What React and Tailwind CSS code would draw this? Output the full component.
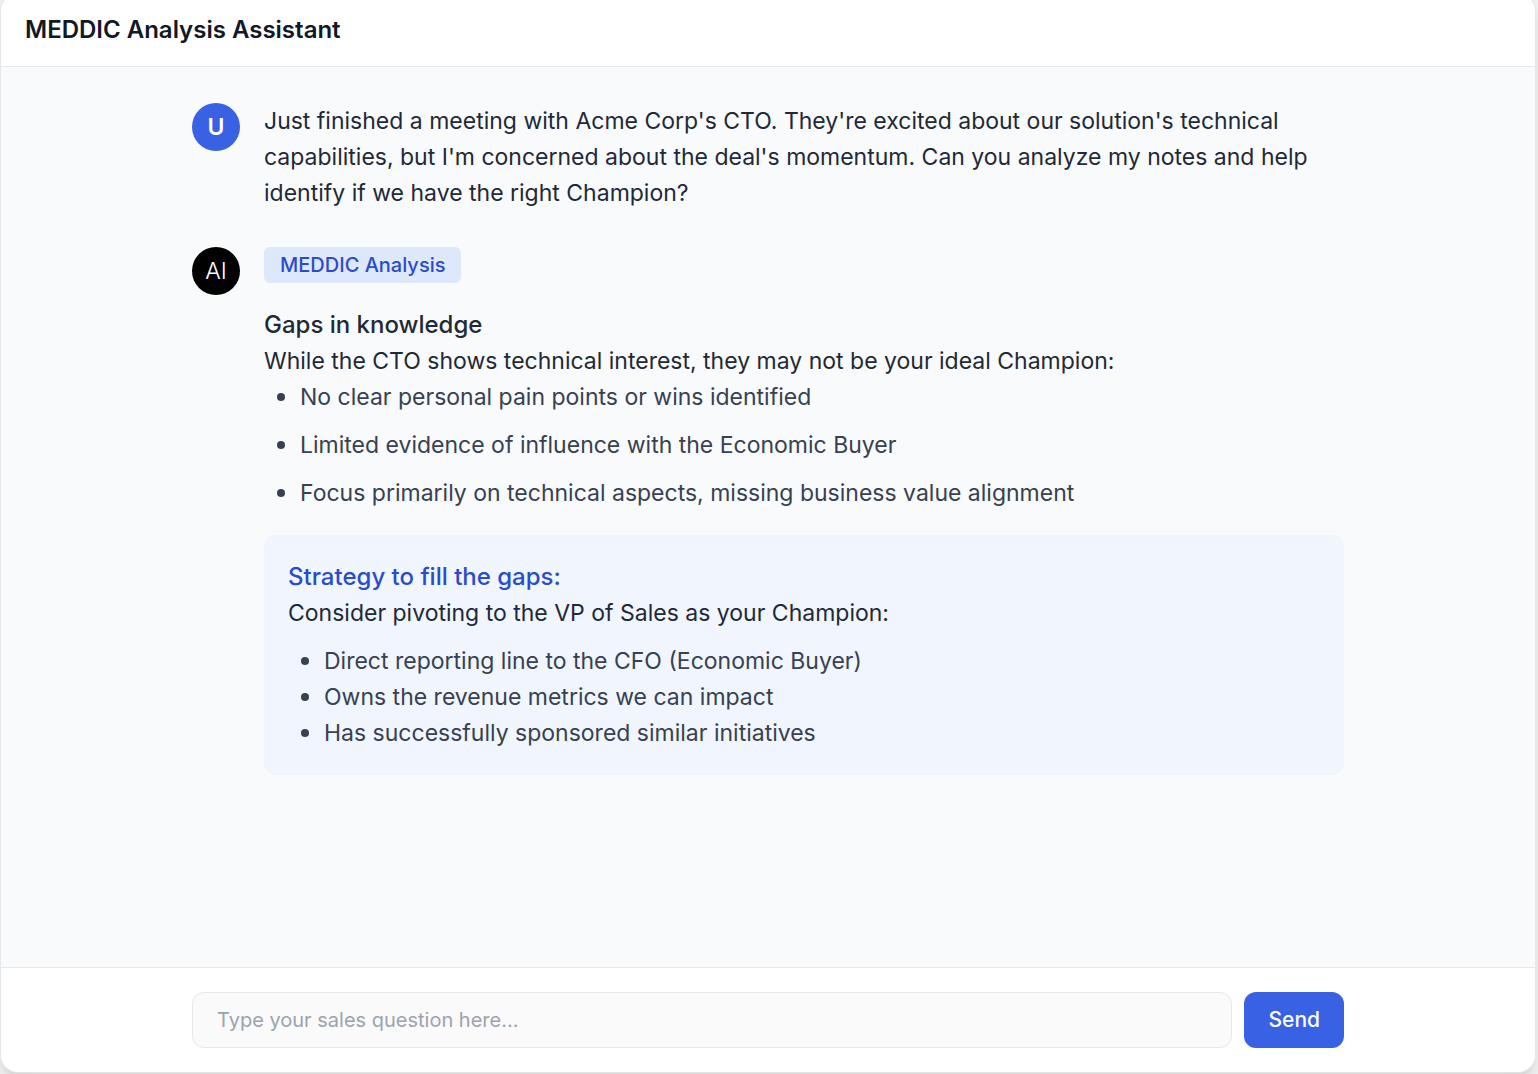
const gaps = [
  'No clear personal pain points or wins identified',
  'Limited evidence of influence with the Economic Buyer',
  'Focus primarily on technical aspects, missing business value alignment',
]

const strategy = [
  'Direct reporting line to the CFO (Economic Buyer)',
  'Owns the revenue metrics we can impact',
  'Has successfully sponsored similar initiatives',
]

function Avatar({ className, children }) {
  return (
    <div className={`flex size-12 shrink-0 items-center justify-center rounded-full text-white ${className}`}>
      {children}
    </div>
  )
}

function BulletList({ items, className }) {
  return (
    <ul className={`text-[#374151] ${className}`}>
      {items.map((item) => (
        <li key={item} className="flex">
          <span aria-hidden="true" className="ml-[13px] mr-[15px] mt-3.5 size-2 shrink-0 rounded-full bg-[#374151]" />
          {item}
        </li>
      ))}
    </ul>
  )
}

export default function App() {
  return (
    <div className="flex h-screen overflow-hidden bg-[#f0f0f0] pr-0.5 pb-px font-['Inter',sans-serif] text-[23px] leading-9 text-[#1f2937]">
      <div className="-mt-[7px] flex flex-1 flex-col overflow-hidden rounded-[18px] border border-[#e5e7eb] bg-white shadow-lg">
        <header className="border-b border-[#e5e7eb] px-6 py-[18px]">
          <h1 className="text-2xl leading-9 font-semibold text-[#111827]">MEDDIC Analysis Assistant</h1>
        </header>

        <main className="min-h-0 flex-1 overflow-y-auto bg-[#f9fafb] py-9">
          <div className="mx-auto flex max-w-6xl flex-col gap-9">
            <section className="flex gap-6">
              <Avatar className="bg-[#3861e3] font-semibold">U</Avatar>
              <p className="min-w-0 flex-1">
                Just finished a meeting with Acme Corp's CTO. They're excited about our solution's technical
                capabilities, but I'm concerned about the deal's momentum. Can you analyze my notes and help
                identify if we have the right Champion?
              </p>
            </section>

            <section className="flex gap-6">
              <Avatar className="bg-black font-light">AI</Avatar>
              <div className="min-w-0 flex-1">
                <span className="inline-block rounded-md bg-[#dde8fb] px-4 text-xl leading-9 font-medium text-[#2a4bd0] align-top">
                  MEDDIC Analysis
                </span>
                <h2 className="mt-6 text-2xl leading-9 font-medium">Gaps in knowledge</h2>
                <p>While the CTO shows technical interest, they may not be your ideal Champion:</p>
                <BulletList items={gaps} className="space-y-3" />
                <div className="mt-6 rounded-xl bg-[#f0f5fe] p-6">
                  <h3 className="text-2xl leading-9 font-medium text-[#2a4bd0]">Strategy to fill the gaps:</h3>
                  <p>Consider pivoting to the VP of Sales as your Champion:</p>
                  <BulletList items={strategy} className="mt-3" />
                </div>
              </div>
            </section>
          </div>
        </main>

        <footer className="border-t border-[#e5e7eb] py-6">
          <form className="mx-auto flex max-w-6xl gap-3 text-xl" onSubmit={(e) => e.preventDefault()}>
            <input
              type="text"
              aria-label="Sales question"
              placeholder="Type your sales question here..."
              className="h-14 min-w-0 flex-1 rounded-xl border border-[#e5e7eb] bg-[#fafafa] px-6 outline-none placeholder:text-[#9ca3af]"
            />
            <button type="submit" className="h-14 rounded-xl bg-[#3861e3] px-6 text-[21px] font-medium text-white">
              Send
            </button>
          </form>
        </footer>
      </div>
    </div>
  )
}
